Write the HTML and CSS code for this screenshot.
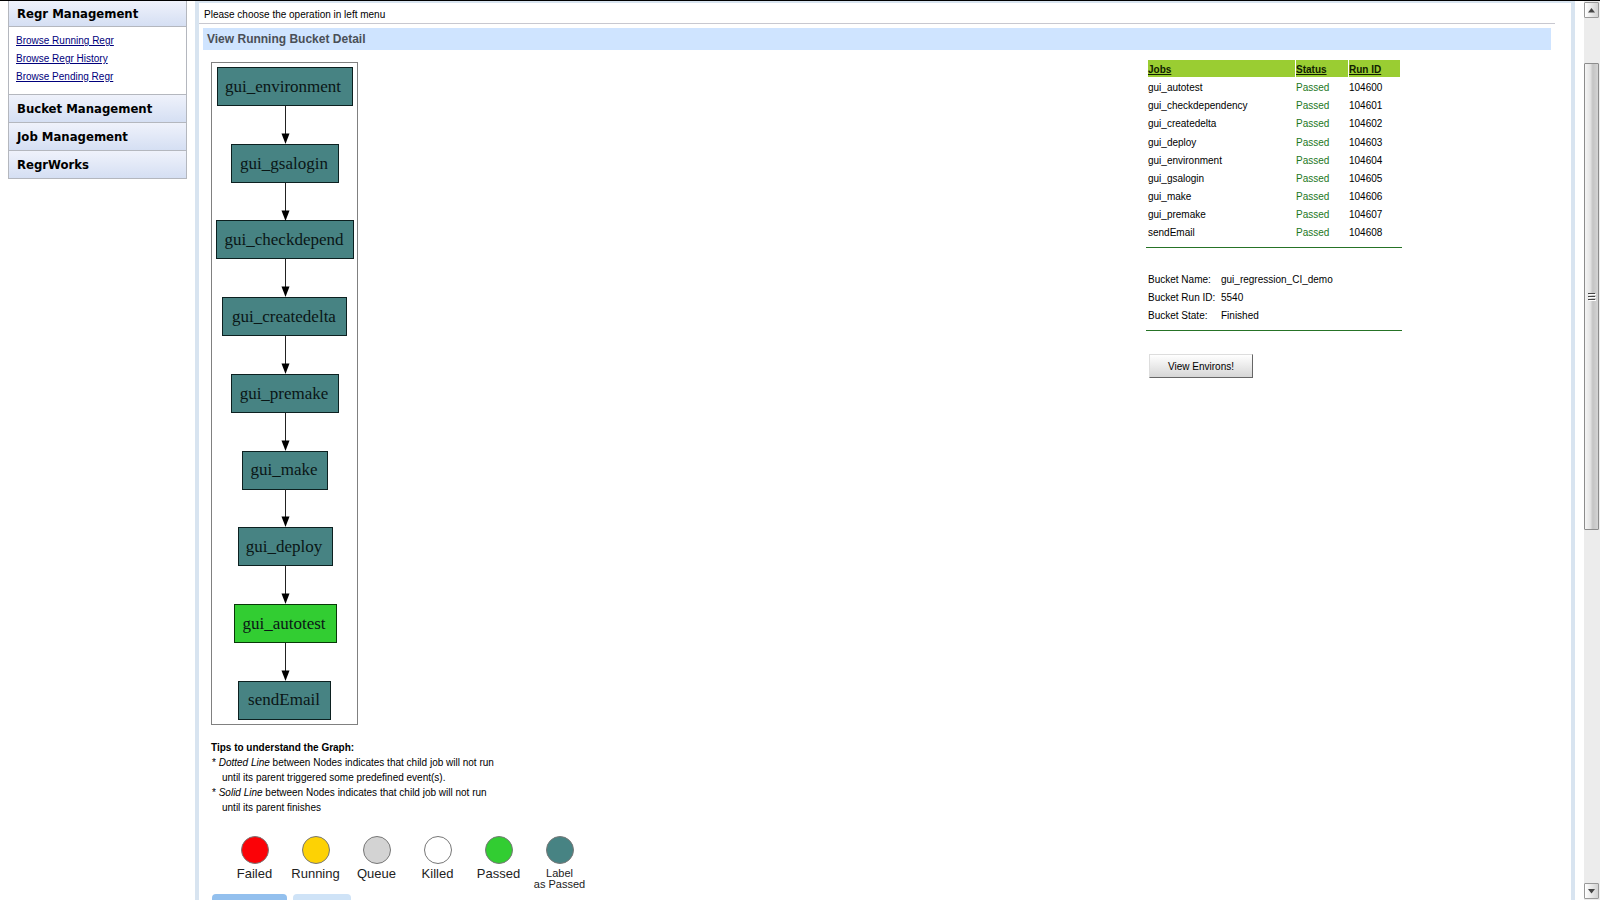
FILE: index.html
```html
<!DOCTYPE html>
<html lang="en">
<head>
<meta charset="utf-8">
<title>View Running Bucket Detail</title>
<link rel="stylesheet" href="styles.css">
</head>
<body>
<nav class="menu">
  <h2 class="menu-head first">Regr Management</h2>
  <ul class="menu-links">
    <li><a href="#running">Browse Running Regr</a></li>
    <li><a href="#history">Browse Regr History</a></li>
    <li><a href="#pending">Browse Pending Regr</a></li>
  </ul>
  <h2 class="menu-head">Bucket Management</h2>
  <h2 class="menu-head">Job Management</h2>
  <h2 class="menu-head">RegrWorks</h2>
</nav>
<main class="main">
  <p class="intro">Please choose the operation in left menu</p>
  <h1 class="title">View Running Bucket Detail</h1>
  <div class="columns">
    <section class="left">
      <svg class="graph" width="147" height="663" viewBox="211 62 147 663" role="img" aria-label="Job graph">
        <defs>
          <g id="edge"><path d="M0 0V30" stroke="#222" stroke-width="1"/><path d="M-4 27.500H4L0 38Z" fill="#000"/></g>
        </defs>
        <rect x="211.500" y="62.500" width="146" height="662" fill="#fff" stroke="#808080"/>
        <g class="node">
          <rect x="217.500" y="67.500" width="135" height="38"/>
          <rect x="231.500" y="144.500" width="107" height="38"/>
          <rect x="216.500" y="220.500" width="137" height="38"/>
          <rect x="222.500" y="297.500" width="124" height="38"/>
          <rect x="231.500" y="374.500" width="107" height="38"/>
          <rect x="242.500" y="451.500" width="85" height="38"/>
          <rect x="238.500" y="527.500" width="94" height="38"/>
          <rect class="passed" x="234.500" y="604.500" width="102" height="38"/>
          <rect x="238.500" y="681.500" width="92" height="38"/>
        </g>
        <use href="#edge" x="285.500" y="106"/>
        <use href="#edge" x="285.500" y="183"/>
        <use href="#edge" x="285.500" y="259"/>
        <use href="#edge" x="285.500" y="336"/>
        <use href="#edge" x="285.500" y="413"/>
        <use href="#edge" x="285.500" y="489"/>
        <use href="#edge" x="285.500" y="566"/>
        <use href="#edge" x="285.500" y="643"/>
        <g class="node-text">
          <text x="283" y="92">gui_environment</text>
          <text x="284" y="169">gui_gsalogin</text>
          <text x="284" y="245">gui_checkdepend</text>
          <text x="284" y="322">gui_createdelta</text>
          <text x="284" y="399">gui_premake</text>
          <text x="284" y="475">gui_make</text>
          <text x="284" y="552">gui_deploy</text>
          <text x="284" y="629">gui_autotest</text>
          <text x="284" y="705">sendEmail</text>
        </g>
      </svg>
      <div class="tips">
        <b>Tips to understand the Graph:</b>
        <p>* <i>Dotted Line</i> between Nodes indicates that child job will not run<br>until its parent triggered some predefined event(s).</p>
        <p>* <i>Solid Line</i> between Nodes indicates that child job will not run<br>until its parent finishes</p>
      </div>
      <ul class="legend">
        <li><span class="dot red"></span>Failed</li>
        <li><span class="dot yellow"></span>Running</li>
        <li><span class="dot gray"></span>Queue</li>
        <li><span class="dot white"></span>Killed</li>
        <li><span class="dot green"></span>Passed</li>
        <li class="small"><span class="dot teal"></span>Label<br>as Passed</li>
      </ul>
      <div class="tabs"><span class="tab active"></span><span class="tab"></span></div>
    </section>
    <aside class="right">
      <table class="jobs">
        <thead><tr><th class="job"><a href="#jobs">Jobs</a></th><th class="status"><a href="#status">Status</a></th><th class="run"><a href="#runid">Run ID</a></th></tr></thead>
        <tbody>
          <tr><td>gui_autotest</td><td class="ok">Passed</td><td>104600</td></tr>
          <tr><td>gui_checkdependency</td><td class="ok">Passed</td><td>104601</td></tr>
          <tr><td>gui_createdelta</td><td class="ok">Passed</td><td>104602</td></tr>
          <tr><td>gui_deploy</td><td class="ok">Passed</td><td>104603</td></tr>
          <tr><td>gui_environment</td><td class="ok">Passed</td><td>104604</td></tr>
          <tr><td>gui_gsalogin</td><td class="ok">Passed</td><td>104605</td></tr>
          <tr><td>gui_make</td><td class="ok">Passed</td><td>104606</td></tr>
          <tr><td>gui_premake</td><td class="ok">Passed</td><td>104607</td></tr>
          <tr><td>sendEmail</td><td class="ok">Passed</td><td>104608</td></tr>
        </tbody>
      </table>
      <dl class="bucket">
        <dt>Bucket Name:</dt><dd>gui_regression_CI_demo</dd>
        <dt>Bucket Run ID:</dt><dd>5540</dd>
        <dt>Bucket State:</dt><dd>Finished</dd>
      </dl>
      <button class="environs" type="button">View Environs!</button>
    </aside>
  </div>
</main>
<div class="scrollbar" aria-hidden="true">
  <div class="arrow"><svg width="7" height="5"><path d="M0 4.500L3.500 0L7 4.500Z" fill="#444"/></svg></div>
  <div class="track">
    <div class="thumb"><svg width="8" height="9"><path d="M0 1.500H7M0 4.500H7M0 7.500H7" stroke="#444"/><path d="M1 2.500H8M1 5.500H8M1 8.500H8" stroke="#fff"/></svg></div>
  </div>
  <div class="arrow"><svg width="7" height="5"><path d="M0 0H7L3.500 4.500Z" fill="#444"/></svg></div>
</div>
</body>
</html>
```
FILE: styles.css
```css
* { box-sizing: border-box; }
html { background: #fff; }
body {
  margin: 0;
  height: 100vh;
  overflow: hidden;
  display: flex;
  border-top: 1px solid #000;
  font: 10px/18px "Liberation Sans", Arial, sans-serif;
  color: #000;
}
h1, h2, p, ul, dl, dd { margin: 0; padding: 0; }
ul { list-style: none; }

.menu { flex: none; width: 179px; margin: 0 8px; align-self: flex-start; border: 1px solid #b4b7be; border-top: 0; }
.menu-head {
  padding: 1px 8px 0;
  border-top: 1px solid #b4b7be;
  font: bold 13px/26px "DejaVu Sans Condensed", "DejaVu Sans", sans-serif;
  background: linear-gradient(#eff2fb, #d5dff3);
}
.menu-head.first { padding-top: 0; border: 0; line-height: 25px; }
.menu-links { padding: 5px 7px 8px; border-top: 1px solid #b4b7be; }
.menu-links a { color: #00007c; }

.main { flex: 1; min-width: 0; border: 4px solid #d8e4f0; border-width: 2px 4px 0; }
.intro { height: 21px; margin-right: 16px; padding-left: 5px; line-height: 24px; border-bottom: 1px solid #c8c8d0; }
.title { margin: 4px 20px 0 4px; padding: 1px 0 0 4px; font-size: 12px; line-height: 21px; color: #4a4f57; background: #cfe4ff; }
.columns { display: grid; grid-template-columns: 1fr 425px; }

.left { padding: 12px 0 0 12px; }
.graph { display: block; }
.node rect { fill: #478383; stroke: #0c2020; }
.node .passed { fill: #32cd32; stroke: #083808; }
.node-text { font: 17px "Liberation Serif", "Times New Roman", serif; text-anchor: middle; fill: #0a1616; }
.tips { margin-top: 15px; line-height: 15px; }
.tips b { display: block; }
.tips p { padding-left: 11px; text-indent: -10px; }
.legend { display: flex; margin: 21px 0 0 13px; }
.legend li { width: 61px; display: flex; flex-direction: column; align-items: center; font-size: 13px; line-height: 20px; color: #222; }
.legend .small { display: block; font-size: 11px; line-height: 11px; text-align: center; }
.dot { display: block; width: 28px; height: 28px; border: 1px solid #777; border-radius: 50%; }
.small .dot { margin: 0 auto 4px; }
.red { background: #fb0207; }
.yellow { background: #fdd204; }
.gray { background: #d3d3d3; }
.white { background: #fff; }
.green { background: #32cd32; }
.teal { background: #478383; }
.tabs { display: flex; gap: 6px; margin: 4px 0 0 1px; }
.tab { width: 58px; height: 20px; border-radius: 4px 4px 0 0; background: #cfe3f7; }
.tab.active { width: 75px; background: #93c0ee; }

.right { width: 256px; padding-top: 10px; }
.jobs { width: 252px; margin-left: 2px; table-layout: fixed; border-collapse: separate; border-spacing: 0; }
.jobs th { height: 17px; padding: 2px 0 0; font-weight: bold; line-height: 15px; text-align: left; background: #9acd32; border-left: 1px solid #fff; }
.jobs th.job { border-left: 0; }
.jobs th a { color: #102000; }
.jobs td { height: 18px; padding: 0 0 0 1px; }
.jobs td:first-child { padding-left: 0; }
.jobs tbody tr:first-child td { height: 20px; padding-top: 2px; }
.jobs tbody tr:nth-child(n+4) td { padding-top: 1px; line-height: 17px; }
.jobs .job { width: 147px; }
.jobs .status { width: 53px; }
.jobs .ok { color: #1c771c; }
.bucket { display: grid; grid-template-columns: 73px 1fr; margin-top: 6px; padding: 23px 2px 5px; border: 1px solid #267326; border-width: 1px 0; }
.environs {
  display: block;
  margin: 23px 0 0 3px;
  width: 104px;
  height: 24px;
  padding: 2px 0 0;
  border: 1px solid #ddd;
  border-right: 1px solid #666;
  border-bottom: 1px solid #666;
  font: inherit;
  line-height: 18px;
  background: linear-gradient(#fff, #d6d6d6);
}

.scrollbar { flex: none; width: 16px; margin-left: 9px; padding: 1px 1px 1px 0; display: flex; flex-direction: column; background: #ececec; }
.arrow { height: 16px; display: flex; align-items: center; justify-content: center; border: 1px solid #999; border-radius: 1px; background: linear-gradient(90deg, #fff, #d2d2d2); }
.track { flex: 1; padding-top: 45px; }
.thumb { height: 57%; display: flex; align-items: center; justify-content: center; border: 1px solid #8c8c8c; border-radius: 1px; background: linear-gradient(90deg, #f5f5f5, #e4e4e4 40%, #c4c4c4 60%, #d4d4d4); }
```
